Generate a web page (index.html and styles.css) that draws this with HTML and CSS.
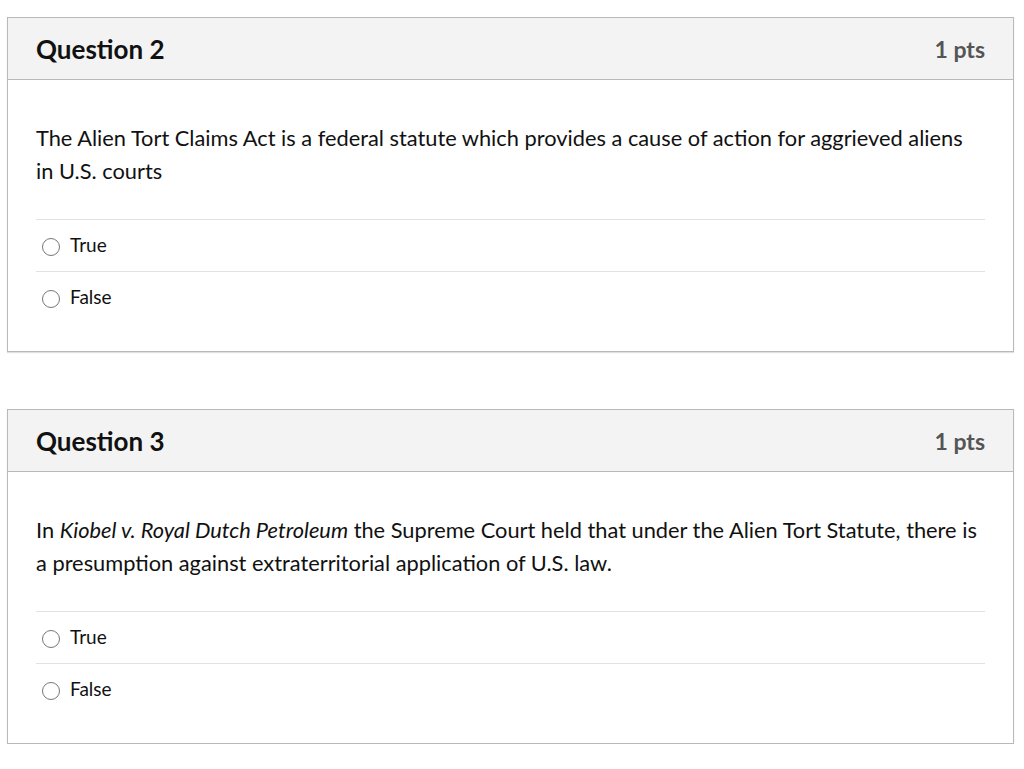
FILE: index.html
```html
<!DOCTYPE html>
<html>
<head>
<meta charset="utf-8">
<link rel="stylesheet" href="styles.css">
</head>
<body>
<div class="page">
  <div class="question">
    <div class="q-header">
      <span class="q-title">Question 2</span>
      <span class="q-pts">1 pts</span>
    </div>
    <div class="q-body">
      <p class="q-text">The Alien Tort Claims Act is a federal statute which provides a cause of action for aggrieved aliens in U.S. courts</p>
      <div class="answers">
        <label class="answer"><span class="radio"></span><span>True</span></label>
        <label class="answer"><span class="radio"></span><span>False</span></label>
      </div>
    </div>
  </div>
  <div class="question">
    <div class="q-header">
      <span class="q-title">Question 3</span>
      <span class="q-pts">1 pts</span>
    </div>
    <div class="q-body">
      <p class="q-text">In <em>Kiobel v. Royal Dutch Petroleum</em> the Supreme Court held that under the Alien Tort Statute, there is a presumption against extraterritorial application of U.S. law.</p>
      <div class="answers">
        <label class="answer"><span class="radio"></span><span>True</span></label>
        <label class="answer"><span class="radio"></span><span>False</span></label>
      </div>
    </div>
  </div>
</div>
</body>
</html>
```
FILE: styles.css
```css
html, body {
  margin: 0;
  padding: 0;
  background: #fff;
}
body {
  font-family: Lato, "Open Sans", sans-serif;
  color: #2d3b45;
}
.page {
  padding: 17px 10px 0 7px;
  display: flex;
  flex-direction: column;
  gap: 57px;
}
.question {
  border: 1px solid #b9b9b9;
  box-shadow: 0 1px 1px rgba(0,0,0,0.12);
  background: #fff;
}
.q-header {
  background: #f3f3f3;
  border-bottom: 1px solid #b9b9b9;
  height: 61px;
  padding: 0 28px;
  display: flex;
  align-items: center;
  justify-content: space-between;
}
.q-title {
  font-weight: 700;
  font-size: 26px;
  color: #111;
}
.q-pts {
  font-weight: 700;
  font-size: 23px;
  color: #555;
}
.q-body {
  padding: 41px 28px 28px;
}
.q-text {
  margin: 0;
  font-size: 21.8px;
  line-height: 33px;
  color: #111;
}
.answers {
  margin-top: 32px;
}
.answer {
  display: flex;
  align-items: center;
  gap: 10px;
  height: 52px;
  box-sizing: border-box;
  padding-bottom: 2px;
  border-top: 1px solid #e2e2e2;
  padding-left: 6px;
  font-size: 19px;
  color: #111;
}
.radio {
  width: 16px;
  height: 16px;
  margin-top: 4px;
  border: 1px solid #777;
  border-radius: 50%;
  flex: none;
}
```
